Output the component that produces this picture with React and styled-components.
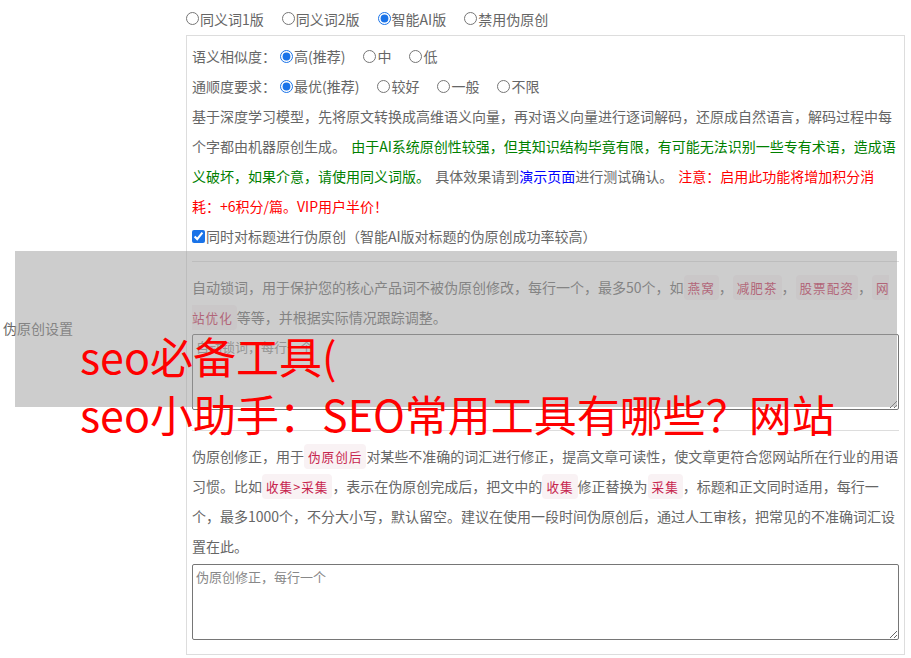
import styled, { createGlobalStyle } from "styled-components";

const GlobalStyle = createGlobalStyle`
  html, body {
    margin: 0;
    padding: 0;
    background: #fff;
  }
  body {
    font-family: "Noto Sans CJK SC", "Noto Sans", sans-serif;
    font-size: 14px;
    color: #666;
  }
`;

const Page = styled.div`
  position: relative;
  width: 911px;
  min-height: 658px;
  overflow: hidden;
`;

const FormRow = styled.div`
  display: grid;
  grid-template-columns: 186px 1fr;
`;

const Label = styled.div`
  align-self: center;
  padding: 0 0 34px 3px;
  line-height: 30px;
`;

const Cell = styled.div`
  padding-right: 6px;
`;

const TopChoices = styled.div`
  display: flex;
  align-items: center;
  gap: 18px;
  height: 35px;
  padding-top: 2px;
  box-sizing: border-box;
`;

const Choice = styled.label`
  display: inline-flex;
  align-items: center;
  white-space: nowrap;
  cursor: pointer;

  input {
    margin: 0 1px 0 0;
    width: 13px;
    height: 13px;
    accent-color: #1a73e8;
  }
`;

const Panel = styled.div`
  border: 1px solid #ddd;
  padding: 5px 5px 14px 5px;
`;

const Line = styled.div`
  display: flex;
  align-items: center;
  gap: 18px;
  line-height: 30px;
`;

const Prompt = styled.span`
  margin-right: -14px;
  white-space: nowrap;
`;

const Para = styled.p`
  margin: 0;
  line-height: 30px;
  word-spacing: ${(p) => p.$spacing || 0}px;
`;

const Tone = styled.span`
  color: ${(p) => p.$color};
`;

const Tag = styled.code`
  font-family: "Noto Sans CJK SC", sans-serif;
  font-size: 12.6px;
  line-height: 1;
  letter-spacing: 1px;
  padding: 3px 4px;
  color: #c7254e;
  background: #f9f2f4;
  border-radius: 4px;
`;

const Rule = styled.hr`
  border: 0;
  border-top: 1px solid #ddd;
  margin: ${(p) => p.$top}px 0 10px;
`;

const Area = styled.textarea`
  display: block;
  box-sizing: border-box;
  width: 100%;
  height: 76px;
  margin: ${(p) => p.$top}px 0 0;
  padding: 2px 3px;
  border: 1px solid #767676;
  border-radius: 2px;
  font-family: "Noto Sans CJK SC", sans-serif;
  font-size: 13px;
  color: #333;
  background: transparent;

  &::placeholder {
    color: #888;
  }
`;

const Shade = styled.div`
  position: absolute;
  left: 15px;
  top: 251px;
  width: 882px;
  height: 156px;
  background: rgba(160, 160, 160, 0.52);
  pointer-events: none;
`;

const Caption = styled.div`
  position: absolute;
  left: 80px;
  top: 326px;
  font-family: "Noto Sans CJK SC", sans-serif;
  font-size: 43px;
  line-height: 58px;
  color: #f00;
  white-space: nowrap;
  pointer-events: none;
`;

export default function App() {
  return (
    <Page>
      <GlobalStyle />
      <FormRow>
        <div />
        <Cell>
          <TopChoices>
            <Choice><input type="radio" name="mode" />同义词1版</Choice>
            <Choice><input type="radio" name="mode" />同义词2版</Choice>
            <Choice><input type="radio" name="mode" defaultChecked />智能AI版</Choice>
            <Choice><input type="radio" name="mode" />禁用伪原创</Choice>
          </TopChoices>
        </Cell>
      </FormRow>
      <FormRow>
        <Label>伪原创设置</Label>
        <Cell>
          <Panel>
            <Line>
              <Prompt>语义相似度：</Prompt>
              <Choice><input type="radio" name="sim" defaultChecked />高(推荐)</Choice>
              <Choice><input type="radio" name="sim" />中</Choice>
              <Choice><input type="radio" name="sim" />低</Choice>
            </Line>
            <Line>
              <Prompt>通顺度要求：</Prompt>
              <Choice><input type="radio" name="flu" defaultChecked />最优(推荐)</Choice>
              <Choice><input type="radio" name="flu" />较好</Choice>
              <Choice><input type="radio" name="flu" />一般</Choice>
              <Choice><input type="radio" name="flu" />不限</Choice>
            </Line>
            <Para $spacing={2}>
              基于深度学习模型，先将原文转换成高维语义向量，再对语义向量进行逐词解码，还原成自然语言，解码过程中每个字都由机器原创生成。{" "}
              <Tone $color="#008000">
                由于AI系统原创性较强，但其知识结构毕竟有限，有可能无法识别一些专有术语，造成语义破坏，如果介意，请使用同义词版。
              </Tone>{" "}
              具体效果请到<Tone $color="#0000ff">演示页面</Tone>进行测试确认。{" "}
              <Tone $color="#ff0000">注意：启用此功能将增加积分消耗：+6积分/篇。VIP用户半价！</Tone>
            </Para>
            <Line>
              <Choice><input type="checkbox" defaultChecked />同时对标题进行伪原创（智能AI版对标题的伪原创成功率较高）</Choice>
            </Line>
            <Rule $top={10} />
            <Para>
              自动锁词，用于保护您的核心产品词不被伪原创修改，每行一个，最多50个，如<Tag>燕窝</Tag>，<Tag>减肥茶</Tag>，<Tag>股票配资</Tag>，<Tag>网站优化</Tag>等等，并根据实际情况跟踪调整。
            </Para>
            <Area $top={2} placeholder="自动锁词，每行一个" />
            <Rule $top={20} />
            <Para>
              伪原创修正，用于<Tag>伪原创后</Tag>对某些不准确的词汇进行修正，提高文章可读性，使文章更符合您网站所在行业的用语习惯。比如<Tag>收集&gt;采集</Tag>，表示在伪原创完成后，把文中的<Tag>收集</Tag>修正替换为<Tag>采集</Tag>，标题和正文同时适用，每行一个，最多1000个，不分大小写，默认留空。建议在使用一段时间伪原创后，通过人工审核，把常见的不准确词汇设置在此。
            </Para>
            <Area $top={3} placeholder="伪原创修正，每行一个" />
          </Panel>
        </Cell>
      </FormRow>
      <Shade />
      <Caption>
        seo必备工具(
        <br />
        seo小助手：SEO常用工具有哪些？网站
      </Caption>
    </Page>
  );
}
